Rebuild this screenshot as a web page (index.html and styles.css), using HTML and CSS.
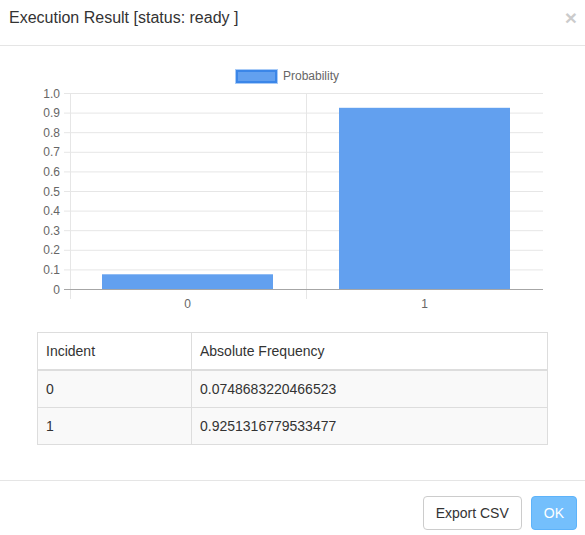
FILE: index.html
```html
<!DOCTYPE html>
<html>
<head>
<meta charset="utf-8">
<link rel="stylesheet" href="styles.css">
</head>
<body>
<div class="modal">
  <div class="modal-header">
    <h4 class="modal-title">Execution Result [status: ready ]</h4>
    <button class="close" type="button">×</button>
  </div>
  <div class="modal-body">
    <div class="chart">
      <svg width="585" height="286" viewBox="0 46 585 286" xmlns="http://www.w3.org/2000/svg">
        <g class="legend">
          <rect x="235.5" y="69.5" width="42" height="14" fill="none" stroke="#a8cbf7" stroke-width="1"/>
          <rect x="237" y="71" width="39" height="11" fill="#62a0ef" stroke="#3b86e8" stroke-width="2"/>
          <text x="283" y="80" class="lbl">Probability</text>
        </g>
        <g class="grid" stroke="#e6e6e6" stroke-width="1">
          <line x1="64" x2="543" y1="93.5" y2="93.5"/>
          <line x1="64" x2="543" y1="113.1" y2="113.1"/>
          <line x1="64" x2="543" y1="132.7" y2="132.7"/>
          <line x1="64" x2="543" y1="152.3" y2="152.3"/>
          <line x1="64" x2="543" y1="171.9" y2="171.9"/>
          <line x1="64" x2="543" y1="191.5" y2="191.5"/>
          <line x1="64" x2="543" y1="211.1" y2="211.1"/>
          <line x1="64" x2="543" y1="230.7" y2="230.7"/>
          <line x1="64" x2="543" y1="250.3" y2="250.3"/>
          <line x1="64" x2="543" y1="269.9" y2="269.9"/>
          <line x1="70.5" x2="70.5" y1="93" y2="299"/>
          <line x1="306.5" x2="306.5" y1="93" y2="299"/>
        </g>
        <rect x="102" y="274.3" width="171" height="15.2" fill="#62a0ef"/>
        <rect x="339" y="107.8" width="171" height="181.7" fill="#62a0ef"/>
        <line x1="64" x2="543" y1="289.5" y2="289.5" stroke="#a6a6a6" stroke-width="1"/>
        <g class="lbl" text-anchor="end">
          <text x="60" y="97.5">1.0</text>
          <text x="60" y="117.1">0.9</text>
          <text x="60" y="136.7">0.8</text>
          <text x="60" y="156.3">0.7</text>
          <text x="60" y="175.9">0.6</text>
          <text x="60" y="195.5">0.5</text>
          <text x="60" y="215.1">0.4</text>
          <text x="60" y="234.7">0.3</text>
          <text x="60" y="254.3">0.2</text>
          <text x="60" y="273.9">0.1</text>
          <text x="60" y="293.5">0</text>
        </g>
        <g class="lbl" text-anchor="middle">
          <text x="187.5" y="308">0</text>
          <text x="424.5" y="308">1</text>
        </g>
      </svg>
    </div>
    <table class="table">
      <thead>
        <tr><th class="c1">Incident</th><th>Absolute Frequency</th></tr>
      </thead>
      <tbody>
        <tr><td class="c1">0</td><td>0.0748683220466523</td></tr>
        <tr><td class="c1">1</td><td>0.9251316779533477</td></tr>
      </tbody>
    </table>
  </div>
  <div class="modal-footer">
    <button class="btn btn-default" type="button">Export CSV</button>
    <button class="btn btn-primary" type="button">OK</button>
  </div>
</div>
</body>
</html>
```
FILE: styles.css
```css
html, body {
  margin: 0;
  padding: 0;
  background: #fff;
}
body {
  font-family: "Liberation Sans", Arial, sans-serif;
  font-size: 14px;
  line-height: 20px;
  color: #333;
}
.modal {
  width: 585px;
}
.modal-header {
  display: flex;
  justify-content: space-between;
  align-items: flex-start;
  padding: 7px 8px 15px 9px;
  border-bottom: 1px solid #e5e5e5;
  height: 23px;
}
.modal-title {
  margin: 0;
  font-size: 16px;
  font-weight: normal;
  line-height: 22px;
  color: #333;
}
.close {
  border: 0;
  background: none;
  padding: 0;
  margin: 0;
  font-family: "Liberation Sans", Arial, sans-serif;
  font-size: 21px;
  font-weight: bold;
  line-height: 21px;
  color: #000;
  opacity: 0.2;
  cursor: pointer;
}
.modal-body {
  padding: 0 37px 35px 37px;
}
.chart {
  margin: 0 -37px;
  height: 286px;
}
.chart svg {
  display: block;
}
.lbl, .lbl text {
  font-family: "Liberation Sans", Arial, sans-serif;
  font-size: 12px;
  fill: #666;
}
.table {
  width: 511px;
  border-collapse: collapse;
  border-spacing: 0;
  border: 1px solid #ddd;
}
.table th, .table td {
  padding: 8px;
  line-height: 20px;
  text-align: left;
  font-weight: normal;
  border: 1px solid #ddd;
  vertical-align: top;
}
.table thead th {
  border-bottom: 2px solid #ddd;
}
.table tbody td {
  background: #f9f9f9;
}
.table .c1 {
  width: 137px;
}
.modal-footer {
  border-top: 1px solid #e5e5e5;
  padding: 15px 8px 15px 15px;
  display: flex;
  justify-content: flex-end;
  gap: 9px;
}
.btn {
  font-family: "Liberation Sans", Arial, sans-serif;
  font-size: 14px;
  line-height: 20px;
  padding: 6px 12px;
  border: 1px solid #ccc;
  border-radius: 4px;
  background: #fff;
  color: #333;
  margin: 0;
}
.btn-primary {
  background: #74bffc;
  border-color: #5db3fa;
  color: #fff;
}
```
